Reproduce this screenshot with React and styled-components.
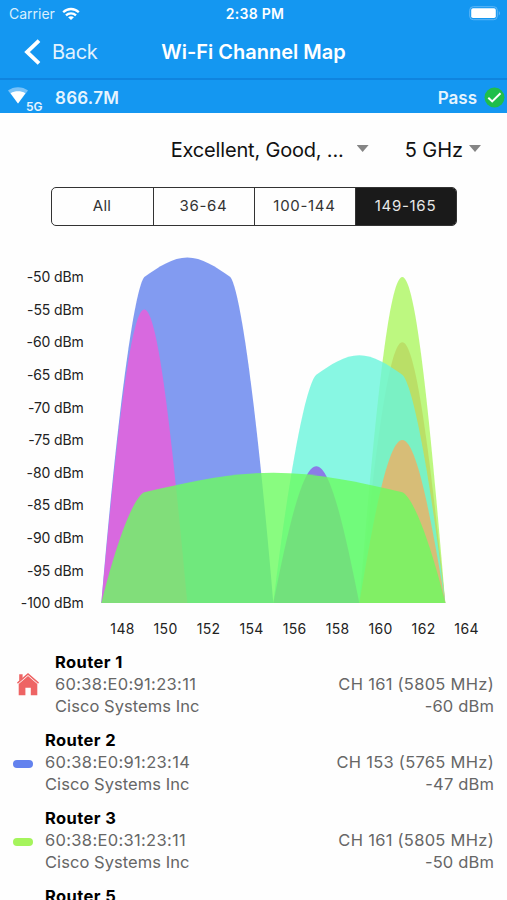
import React from 'react';
import styled, { createGlobalStyle } from 'styled-components';

const channelX = (ch) => 144.3 + (ch - 149) * 21.5;
const levelY = (dbm) => 37 + (-50 - dbm) * 6.522;
const BASE = levelY(-100);

const levels = [-50, -55, -60, -65, -70, -75, -80, -85, -90, -95, -100];
const channels = [148, 150, 152, 154, 156, 158, 160, 162, 164];

// from / to are the outer 20 MHz channels, edge is the level at their centers
const networks = [
  { from: 161, to: 161, peak: -60, color: '#ee6464' },
  { from: 149, to: 153, edge: -50, peak: -47, color: '#6382ee' },
  { from: 161, to: 161, peak: -50, color: '#acf660' },
  { from: 149, to: 149, peak: -55, color: '#ee5cdb' },
  { from: 157, to: 161, edge: -65, peak: -62, color: '#6af5dc' },
  { from: 157, to: 157, peak: -79, color: '#8c5be9' },
  { from: 161, to: 161, peak: -75, color: '#efb064' },
  { from: 149, to: 161, edge: -83, peak: -80, color: '#6bfb60' },
];

const routers = [
  { name: 'Router 1', mac: '60:38:E0:91:23:11', channel: 'CH 161 (5805 MHz)', signal: '-60 dBm', home: true, color: '#ee6464' },
  { name: 'Router 2', mac: '60:38:E0:91:23:14', channel: 'CH 153 (5765 MHz)', signal: '-47 dBm', color: '#6382ee' },
  { name: 'Router 3', mac: '60:38:E0:31:23:11', channel: 'CH 161 (5805 MHz)', signal: '-50 dBm', color: '#a5f45c' },
  { name: 'Router 5' },
];

const networkPath = ({ from, to, edge, peak }) => {
  const left = channelX(from - 2);
  const right = channelX(to + 2);
  const mid = (left + right) / 2;
  const top = levelY(peak);
  if (edge === undefined) {
    const w = right - mid;
    const h = BASE - top;
    return `M${left} ${BASE}
      C${mid - w * 0.667} ${top + h * 0.476} ${mid - w * 0.333} ${top} ${mid} ${top}
      C${mid + w * 0.333} ${top} ${mid + w * 0.667} ${top + h * 0.476} ${right} ${BASE}Z`;
  }
  const a = channelX(from);
  const b = channelX(to);
  const ey = levelY(edge);
  const h = BASE - ey;
  const w = a - left;
  const cw = mid - a;
  const cy = top + (ey - top) * 0.476;
  return `M${left} ${BASE}
    C${a - w * 0.65} ${ey + h * 0.45} ${a - w * 0.25} ${ey + h * 0.04} ${a} ${ey}
    C${a + cw * 0.333} ${cy} ${mid - cw * 0.333} ${top} ${mid} ${top}
    C${mid + cw * 0.333} ${top} ${b - cw * 0.333} ${cy} ${b} ${ey}
    C${b + w * 0.25} ${ey + h * 0.04} ${b + w * 0.65} ${ey + h * 0.45} ${right} ${BASE}Z`;
};

const WifiIcon = () => (
  <svg width='18' height='14' viewBox='0 0 18 14' fill='none' stroke='#fff' strokeWidth='2.3'>
    <path d='M1.2 5.2C5.6.9 12.4.9 16.8 5.2' />
    <path d='M4 8.3c2.8-2.7 7.2-2.7 10 0' />
    <path d='M9 13 6.1 10.3c1.6-1.5 4.2-1.5 5.8 0z' fill='#fff' stroke='none' />
  </svg>
);

const BatteryIcon = () => (
  <svg width='32' height='15' viewBox='0 0 32 15'>
    <rect x='.7' y='.7' width='27.6' height='13' rx='3.6' fill='none' stroke='#5fb7f6' strokeWidth='1' />
    <rect x='2.2' y='2.3' width='24.6' height='9.8' rx='1.8' fill='#fff' />
    <path d='M29.8 5c1.6.7 1.6 3.8 0 4.5z' fill='#5fb7f6' />
  </svg>
);

const SignalIcon = () => (
  <svg width='20' height='17' viewBox='0 0 20 17'>
    <path d='M0 3.6C5.5-.9 14.5-.9 20 3.6L10 16.5z' fill='#79c2f8' />
    <path d='M2.6 6.2C7 3.6 13 3.6 17.4 6.2L10 16.5z' fill='#fff' />
  </svg>
);

const PassIcon = () => (
  <svg width='21' height='21' viewBox='0 0 21 21'>
    <circle cx='10.5' cy='10.5' r='10' fill='#1fbe4a' />
    <path d='m4.3 10.7 3.9 3.7 8.3-8.1' fill='none' stroke='#fff' strokeWidth='2' />
  </svg>
);

const HomeIcon = ({ color }) => (
  <svg width='22' height='23' viewBox='0 0 22 23' fill={color}>
    <path d='M2.2 1.2h3.4v4L2.2 8z' />
    <path d='M0 9.6 11 0l11 9.6-.9 1.2L11 2 .9 10.8z' />
    <path d='M1.7 11.1 11 3l9.300 8.100V22.300h-6.500v-7.500H8.400v7.500H1.700z' />
  </svg>
);

const App = () => {
  return (
    <>
      <GlobalStyle />
      <Screen>
        <StatusBar>
          <Carrier>
            Carrier <WifiIcon />
          </Carrier>
          <Clock>2:38 PM</Clock>
          <BatteryIcon />
        </StatusBar>
        <NavBar>
          <BackButton type='button'>
            <svg width='17' height='26' viewBox='0 0 17 26' fill='none' stroke='#fff' strokeWidth='3.8'>
              <path d='M15 1.6 3 13l12 11.4' />
            </svg>
            Back
          </BackButton>
          <Title>Wi-Fi Channel Map</Title>
        </NavBar>
        <LinkBar>
          <Signal>
            <SignalIcon />
          </Signal>
          <Band>5G</Band>
          <Speed>866.7M</Speed>
          <Result>Pass</Result>
          <PassIcon />
        </LinkBar>
        <Filters>
          <Select $gap='13px' $spacing='-0.18px'>
            Excellent, Good, ... <Caret />
          </Select>
          <Select $gap='6px' $spacing='-0.05px'>
            5 GHz <Caret />
          </Select>
        </Filters>
        <Segments>
          <Segment>All</Segment>
          <Segment>36-64</Segment>
          <Segment>100-144</Segment>
          <Segment $active>149-165</Segment>
        </Segments>
        <Chart viewBox='0 0 507 408'>
          {networks.map((net, i) => (
            <path key={i} d={networkPath(net)} fill={net.color} fillOpacity='0.8' />
          ))}
          {levels.map((dbm) => (
            <Level key={dbm} x='83.8' y={levelY(dbm) + 5.2} textAnchor='end'>
              {dbm} dBm
            </Level>
          ))}
          {channels.map((ch) => (
            <Channel key={ch} x={channelX(ch) - 0.2} y='394' textAnchor='middle'>
              {ch}
            </Channel>
          ))}
        </Chart>
        <List>
          {routers.map((router) => (
            <Row key={router.name}>
              {router.color && (
                <Marker $wide={router.home}>
                  {router.home ? <HomeIcon color={router.color} /> : <Swatch $color={router.color} />}
                </Marker>
              )}
              <Info $indent={!router.color}>
                <Name>{router.name}</Name>
                {router.mac && (
                  <>
                    <Line $spacing='0.32px'>{router.mac}</Line>
                    <Line $spacing='0.05px'>Cisco Systems Inc</Line>
                  </>
                )}
              </Info>
              {router.channel && (
                <Reading>
                  <Line $spacing='0.28px'>{router.channel}</Line>
                  <Line $spacing='0.15px'>{router.signal}</Line>
                </Reading>
              )}
            </Row>
          ))}
        </List>
      </Screen>
    </>
  );
};

const GlobalStyle = createGlobalStyle`
  * {
    box-sizing: border-box;
  }
  body {
    margin: 0;
    background: #fefefe;
    overflow: hidden;
  }
  p, h1 {
    margin: 0;
  }
  svg {
    flex-shrink: 0;
    display: block;
  }
`;

const Screen = styled.div`
  width: 507px;
  height: 900px;
  overflow: hidden;
  background: #fefefe;
  font-family: Inter, sans-serif;
  display: flex;
  flex-direction: column;
  white-space: nowrap;
`;

const StatusBar = styled.header`
  height: 27px;
  flex-shrink: 0;
  display: grid;
  grid-template-columns: 1fr auto 1fr;
  align-items: center;
  padding: 0 6px 0 9px;
  background: #1497f1;
  color: #fff;
  font-size: 14px;
  > svg {
    justify-self: end;
  }
`;

const Carrier = styled.div`
  display: flex;
  align-items: center;
  gap: 7px;
  color: #d9effd;
`;

const Clock = styled.div`
  font-weight: 600;
  letter-spacing: 0.3px;
`;

const NavBar = styled.nav`
  height: 53px;
  flex-shrink: 0;
  display: grid;
  grid-template-columns: 1fr auto 1fr;
  align-items: center;
  padding: 0 24px 1px;
  background: #1497f1;
  border-bottom: 2px solid #0f84df;
  color: #fff;
`;

const BackButton = styled.button`
  display: flex;
  align-items: center;
  gap: 11px;
  padding: 0;
  border: 0;
  background: none;
  color: #e2f2fe;
  font: 400 20px Inter, sans-serif;
  letter-spacing: -0.3px;
`;

const Title = styled.h1`
  font-size: 20px;
  font-weight: 600;
`;

const LinkBar = styled.div`
  height: 33px;
  flex-shrink: 0;
  display: flex;
  align-items: center;
  padding: 2px 2px 0 8px;
  background: #1497f1;
  color: #e6f4fe;
  font-size: 17px;
  font-weight: 600;
`;

const Signal = styled.span`
  padding-bottom: 4px;
`;

const Band = styled.span`
  align-self: flex-end;
  width: 29px;
  margin-left: -2px;
  font-size: 12px;
  line-height: 12px;
`;

const Speed = styled.span`
  flex: 1;
  letter-spacing: 0.25px;
`;

const Result = styled.span`
  margin-right: 7px;
`;

const Filters = styled.div`
  display: flex;
  justify-content: flex-end;
  gap: 36px;
  padding: 25px 26px 0 0;
  height: 74px;
  flex-shrink: 0;
`;

const Select = styled.div`
  display: flex;
  gap: ${({ $gap }) => $gap};
  height: 24px;
  line-height: 24px;
  font-size: 20px;
  letter-spacing: ${({ $spacing }) => $spacing};
  color: #111;
`;

const Caret = styled.span`
  margin-top: 7px;
  width: 12px;
  height: 7px;
  background: #858585;
  clip-path: polygon(0 0, 100% 0, 50% 100%);
`;

const Segments = styled.div`
  display: grid;
  grid-template-columns: repeat(4, 1fr);
  width: 406px;
  height: 39px;
  flex-shrink: 0;
  margin-left: 51px;
  border: 1px solid #333;
  border-radius: 5px;
  overflow: hidden;
`;

const Segment = styled.button`
  padding: 0 1px 3px 0;
  border: 0;
  border-left: 1px solid #333;
  background: ${({ $active }) => ($active ? '#1a1a1a' : 'transparent')};
  color: ${({ $active }) => ($active ? '#e8e8e8' : '#333')};
  font: 400 15px Inter, sans-serif;
  letter-spacing: 0.7px;
  &:first-child {
    border-left: 0;
    letter-spacing: 0.3px;
  }
`;

const Chart = styled.svg`
  width: 507px;
  height: 408px;
  flex-shrink: 0;
  margin-top: 14px;
`;

const Level = styled.text`
  font-size: 14px;
  letter-spacing: -0.1px;
  fill: #222;
`;

const Channel = styled.text`
  font-size: 14px;
  letter-spacing: 0.35px;
  fill: #222;
`;

const List = styled.div`
  padding: 3px 13px 0;
`;

const Row = styled.div`
  display: flex;
  align-items: center;
  height: 66px;
  margin-bottom: 12px;
  font-size: 16.5px;
  line-height: 22px;
  color: #666;
`;

const Marker = styled.div`
  width: ${({ $wide }) => ($wide ? '42px' : '32px')};
  padding-left: ${({ $wide }) => ($wide ? '4px' : '0')};
`;

const Swatch = styled.div`
  width: 20px;
  height: 8px;
  border-radius: 4px;
  margin-top: 4px;
  background: ${({ $color }) => $color};
`;

const Info = styled.div`
  flex: 1;
  align-self: flex-start;
  padding-left: ${({ $indent }) => ($indent ? '32px' : '0')};
`;

const Name = styled.p`
  font-weight: 700;
  letter-spacing: 0.4px;
  color: #000;
`;

const Line = styled.p`
  letter-spacing: ${({ $spacing }) => $spacing};
`;

const Reading = styled.div`
  align-self: flex-end;
  text-align: right;
`;

export default App;
